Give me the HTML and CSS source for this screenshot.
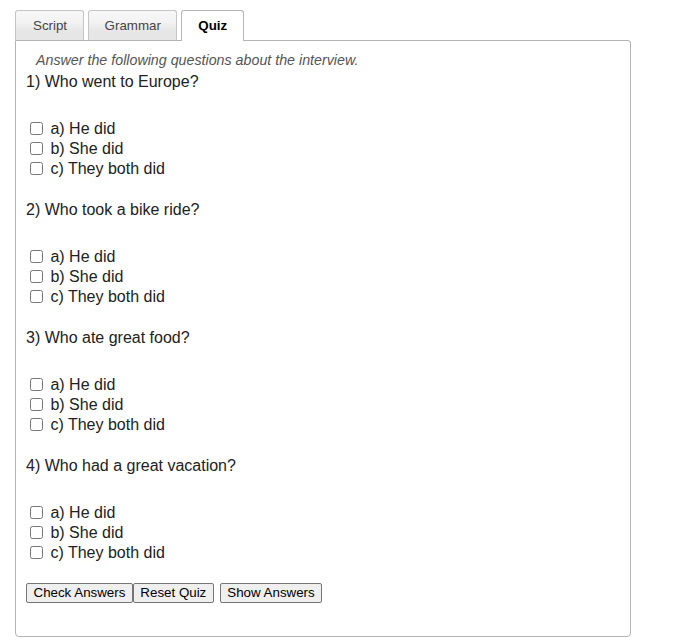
FILE: index.html
```html
<!DOCTYPE html>
<html>
<head>
<meta charset="utf-8">
<link rel="stylesheet" href="styles.css">
</head>
<body>
<div class="wrap">
  <div class="tabs">
    <div class="tab">Script</div>
    <div class="tab">Grammar</div>
    <div class="tab active">Quiz</div>
  </div>
  <div class="panel">
    <div class="intro">Answer the following questions about the interview.</div>

    <div class="q">
      <div class="qtext">1) Who went to Europe?</div>
      <label class="opt"><input type="checkbox"> a) He did</label>
      <label class="opt"><input type="checkbox"> b) She did</label>
      <label class="opt"><input type="checkbox"> c) They both did</label>
    </div>
    <div class="q">
      <div class="qtext">2) Who took a bike ride?</div>
      <label class="opt"><input type="checkbox"> a) He did</label>
      <label class="opt"><input type="checkbox"> b) She did</label>
      <label class="opt"><input type="checkbox"> c) They both did</label>
    </div>
    <div class="q">
      <div class="qtext">3) Who ate great food?</div>
      <label class="opt"><input type="checkbox"> a) He did</label>
      <label class="opt"><input type="checkbox"> b) She did</label>
      <label class="opt"><input type="checkbox"> c) They both did</label>
    </div>
    <div class="q">
      <div class="qtext">4) Who had a great vacation?</div>
      <label class="opt"><input type="checkbox"> a) He did</label>
      <label class="opt"><input type="checkbox"> b) She did</label>
      <label class="opt"><input type="checkbox"> c) They both did</label>
    </div>

    <div class="buttons">
      <button class="btn">Check Answers</button>
      <button class="btn">Reset Quiz</button>
      <button class="btn gap">Show Answers</button>
    </div>
  </div>
</div>
</body>
</html>
```
FILE: styles.css
```css
html, body {
  margin: 0;
  padding: 0;
  background: #fff;
}
body {
  font-family: "Liberation Sans", Arial, sans-serif;
  color: #222;
}
.wrap {
  padding: 10px 0 0 15px;
  width: 616px;
}
.tabs {
  display: flex;
  align-items: flex-start;
  height: 31px;
  margin-bottom: -1px;
  position: relative;
  z-index: 1;
}
.tab {
  box-sizing: border-box;
  height: 30px;
  line-height: 29px;
  padding: 0 16px;
  margin-right: 4px;
  font-size: 13.33px;
  color: #454545;
  border: 1px solid #c5c5c5;
  border-bottom: none;
  border-radius: 3px 3px 0 0;
  background: linear-gradient(to bottom, #f8f8f8 0%, #f2f2f2 40%, #e6e6e6 70%, #e6e6e6 100%);
}
.tab:first-child {
  padding: 0 16px 0 17px;
}
.tab:nth-child(2) {
  padding: 0 15.5px;
}
.tab.active {
  height: 31px;
  background: #fff;
  color: #000;
  font-weight: bold;
  border-color: #b5b5b5;
}
.panel {
  border: 1px solid #b3b3b3;
  border-radius: 0 3px 4px 4px;
  padding: 11px 10px 34px 10px;
  height: 550px;
}
.intro {
  font-size: 14.25px;
  font-style: italic;
  color: #555;
  line-height: 16px;
  padding-left: 10px;
  margin-bottom: 3px;
}
.q {
  margin-bottom: 20px;
}
.qtext {
  font-size: 16px;
  line-height: 20px;
  padding-top: 1px;
  margin-bottom: 27px;
}
.opt {
  display: block;
  font-size: 16px;
  line-height: 20px;
  height: 20px;
}
.opt input {
  margin: 3px 3px 3px 4px;
  vertical-align: -1px;
}
.buttons {
  display: flex;
  margin-top: 17px;
}
.btn {
  font-family: "Liberation Sans", Arial, sans-serif;
  font-size: 13.33px;
  height: 20px;
  padding: 0 6.5px;
  border: 1px solid #767676;
  border-radius: 2px;
  background: #efefef;
  color: #000;
  line-height: 18px;
}
.btn.gap {
  margin-left: 6px;
}
```
